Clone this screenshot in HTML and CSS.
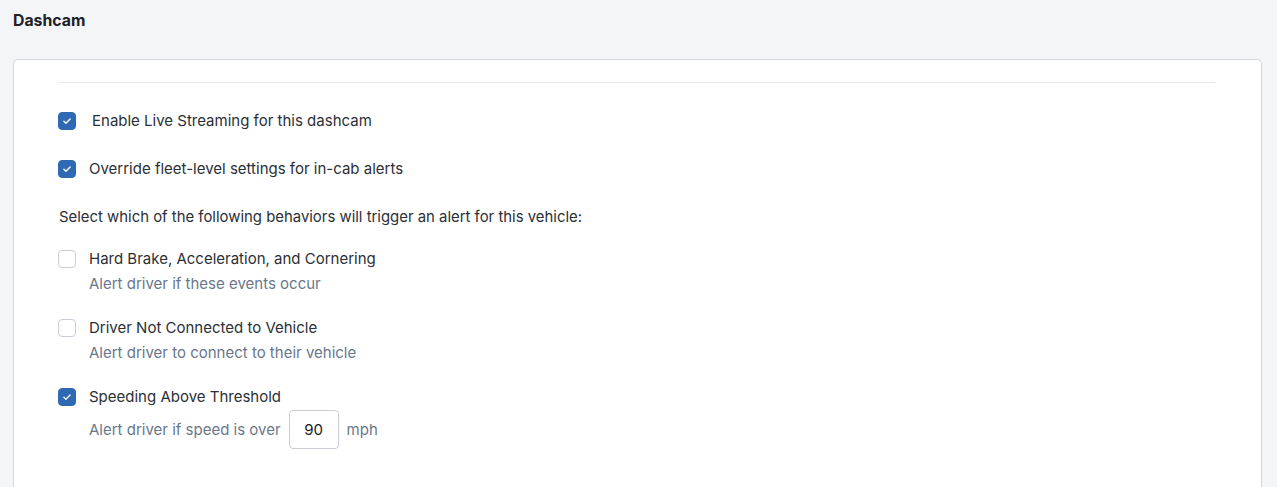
FILE: index.html
```html
<!DOCTYPE html>
<html lang="en">
<head>
  <meta charset="UTF-8">
  <meta name="viewport" content="width=device-width, initial-scale=1.0">
  <title>Dashcam</title>
  <link rel="stylesheet" href="styles.css">
</head>
<body>

<div class="page">
  <h2 class="title">Dashcam</h2>

  <div class="card">
    <div class="divider"></div>

    <!-- Streaming -->
    <label class="option top-option">
      <span class="box checked"><svg viewBox="0 0 18 18"><path d="M5.5 9.2l2.3 2.3 4.7-4.8"/></svg></span>
      <span class="label wide">Enable Live Streaming for this dashcam</span>
    </label>

    <label class="option top-option">
      <span class="box checked"><svg viewBox="0 0 18 18"><path d="M5.5 9.2l2.3 2.3 4.7-4.8"/></svg></span>
      <span class="label">Override fleet-level settings for in-cab alerts</span>
    </label>

    <p class="intro">Select which of the following behaviors will trigger an alert for this vehicle:</p>

    <!-- Alert behaviors -->
    <div class="option behavior first">
      <span class="box"></span>
      <span class="label">Hard Brake, Acceleration, and Cornering</span>
      <span class="hint">Alert driver if these events occur</span>
    </div>

    <div class="option behavior">
      <span class="box"></span>
      <span class="label">Driver Not Connected to Vehicle</span>
      <span class="hint">Alert driver to connect to their vehicle</span>
    </div>

    <div class="option behavior">
      <span class="box checked"><svg viewBox="0 0 18 18"><path d="M5.5 9.2l2.3 2.3 4.7-4.8"/></svg></span>
      <span class="label">Speeding Above Threshold</span>
      <span class="hint speed">Alert driver if speed is over <input type="text" class="speed-input" value="90"> mph</span>
    </div>
  </div>
</div>

</body>
</html>
```

FILE: styles.css
```css
/* Dashcam settings */
body {
  margin: 0;
  background-color: #f4f5f7;
  font-family: Inter, "Noto Sans", sans-serif;
  color: #2b2f36;
  overflow: hidden;
}
.page {
  padding: 10px 15px 0 13px;
}
.title {
  margin: 0;
  font-size: 15.8px;
  font-weight: 700;
  line-height: 21px;
  color: #1d2026;
}
.card {
  margin-top: 28px;
  background: white;
  border: 1px solid #d3d7dd;
  border-bottom: none;
  border-radius: 5px 5px 0 0;
  padding: 22px 46px 40px 44px;
}
.divider {
  height: 1px;
  margin-left: 1px;
  background: #e6e8eb;
}
.option {
  display: grid;
  grid-template-columns: 18px 1fr;
  column-gap: 13px;
  align-items: center;
  font-size: 15px;
  line-height: 22px;
}
.top-option {
  margin-top: 26px;
}
.top-option:first-of-type {
  margin-top: 27px;
}
.label.wide {
  padding-left: 3px;
}
.box {
  width: 18px;
  height: 18px;
  box-sizing: border-box;
  border: 1px solid #c9ced6;
  border-radius: 4px;
  background: white;
  display: flex;
}
.box.checked {
  background: #2f69b3;
  border-color: #2f69b3;
}
.box svg {
  width: 16px;
  height: 16px;
}
.box path {
  fill: none;
  stroke: white;
  stroke-width: 1.5;
  stroke-linecap: round;
  stroke-linejoin: round;
}
.intro {
  margin: 26px 0 0 1px;
  font-size: 14.9px;
  line-height: 22px;
}
.behavior {
  margin-top: 22px;
}
.behavior.first {
  margin-top: 20px;
}
.hint {
  grid-column: 2;
  color: #6a778b;
  margin-top: 3px;
}
.hint.speed {
  margin-top: 2px;
  display: flex;
  align-items: center;
  gap: 8px;
}
.speed-input {
  width: 50px;
  height: 39px;
  box-sizing: border-box;
  border: 1px solid #c9ced6;
  border-radius: 4px;
  font-family: Inter, "Noto Sans", sans-serif;
  font-size: 15px;
  color: #1d2026;
  text-align: center;
  padding: 0;
}
```
